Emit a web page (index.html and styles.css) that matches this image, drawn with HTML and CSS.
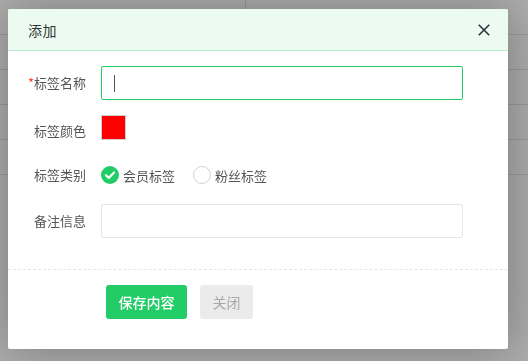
FILE: index.html
```html
<!DOCTYPE html>
<html lang="zh-CN">
<head>
<meta charset="utf-8">
<title>添加</title>
<link rel="stylesheet" href="styles.css">
</head>
<body>
<div class="page">
  <div class="trow"><div class="tcell first"></div><div class="tcell"></div></div>
  <div class="trow"></div>
  <div class="trow"></div>
  <div class="trow"></div>
  <div class="trow"></div>
</div>
<div class="shade"></div>
<div class="dialog">
  <div class="dialog-head">
    <span class="dialog-title">添加</span>
    <svg class="close-icon" width="12" height="12" viewBox="0 0 12 12"><path d="M0.8 0.8 L11.2 11.2 M11.2 0.8 L0.8 11.2" stroke="#2b323c" stroke-width="1.6" fill="none"/></svg>
  </div>
  <div class="dialog-body">
    <div class="form-row">
      <label class="form-label"><span class="req">*</span>标签名称</label>
      <div class="input focus"><span class="caret"></span></div>
    </div>
    <div class="form-row row-color">
      <label class="form-label">标签颜色</label>
      <div class="swatch"></div>
    </div>
    <div class="form-row">
      <label class="form-label">标签类别</label>
      <div class="radios">
        <span class="radio">
          <span class="dot checked"><svg width="18" height="18" viewBox="0 0 18 18"><path d="M5 9.2 L7.8 11.9 L13 6.6" stroke="#fff" stroke-width="2.2" fill="none" stroke-linecap="round" stroke-linejoin="round"/></svg></span>
          <span class="radio-text">会员标签</span>
        </span>
        <span class="radio">
          <span class="dot"></span>
          <span class="radio-text">粉丝标签</span>
        </span>
      </div>
    </div>
    <div class="form-row">
      <label class="form-label">备注信息</label>
      <div class="input"></div>
    </div>
  </div>
  <div class="dialog-foot">
    <button class="btn btn-primary">保存内容</button>
    <button class="btn btn-muted">关闭</button>
  </div>
</div>
</body>
</html>
```
FILE: styles.css
```css
html, body {
  margin: 0;
  padding: 0;
  width: 528px;
  height: 361px;
  overflow: hidden;
  background: #fff;
  font-family: "Noto Sans CJK SC", "Noto Sans", sans-serif;
}
.page {
  display: flex;
  flex-direction: column;
}
.trow {
  height: 34px;
  border-bottom: 1px solid #e2e2e2;
  display: flex;
}
.tcell.first {
  width: 245px;
  border-right: 1px solid #e2e2e2;
}
.shade {
  position: fixed;
  inset: 0;
  background: rgba(0, 0, 0, 0.32);
}
.dialog {
  position: absolute;
  left: 8px;
  top: 9px;
  width: 500px;
  height: 340px;
  background: #fff;
  border-radius: 2px;
  box-shadow: 1px 1px 50px rgba(0, 0, 0, 0.3);
  display: flex;
  flex-direction: column;
  overflow: hidden;
}
.dialog-head {
  height: 41px;
  border-bottom: 1px solid #b8eccb;
  background: #ebfbf1;
  display: flex;
  align-items: center;
  justify-content: space-between;
  padding: 0 18px 0 20px;
}
.dialog-title {
  font-size: 14px;
  color: #333;
  letter-spacing: 0.5px;
}
.close-icon {
  display: block;
  margin-top: 1px;
}
.dialog-body {
  padding-top: 15px;
  display: flex;
  flex-direction: column;
  gap: 12px;
}
.form-row {
  display: flex;
  align-items: center;
  height: 34px;
}
.form-label {
  width: 78px;
  margin-right: 15px;
  text-align: right;
  font-size: 13px;
  color: #555;
  line-height: 34px;
}
.row-color {
  align-items: flex-start;
}
.row-color .form-label {
  line-height: 38px;
}
.req {
  color: #ff3b30;
}
.input {
  box-sizing: border-box;
  width: 362px;
  height: 34px;
  border: 1px solid #e6e6e6;
  border-radius: 2px;
  display: flex;
  align-items: center;
  padding-left: 12px;
}
.input.focus {
  border-color: #22cc66;
}
.caret {
  display: block;
  width: 1px;
  height: 17px;
  background: #555;
}
.swatch {
  box-sizing: border-box;
  width: 25px;
  height: 25px;
  margin-top: 3px;
  border: 1px solid #cfcfcf;
  background: #ff0000;
}
.radios {
  display: flex;
  align-items: center;
  gap: 18px;
}
.radio {
  display: flex;
  align-items: center;
  gap: 4px;
}
.dot {
  box-sizing: border-box;
  width: 18px;
  height: 18px;
  border-radius: 50%;
  border: 1px solid #d2d2d2;
  background: #fff;
  display: flex;
}
.dot.checked {
  border: none;
  background: #22cc66;
}
.radio-text {
  font-size: 13px;
  color: #555;
}
.dialog-foot {
  margin-top: 31px;
  border-top: 1px dashed #e6e6e6;
  padding: 15px 0 0 98px;
  display: flex;
  gap: 13px;
}
.btn {
  height: 34px;
  border: none;
  border-radius: 3px;
  font-family: "Noto Sans CJK SC", "Noto Sans", sans-serif;
  font-size: 14px;
  padding: 0 12.5px;
  cursor: pointer;
}
.btn-primary {
  background: #22cc66;
  color: #fff;
  font-weight: 500;
}
.btn-muted {
  background: #ebebeb;
  color: #a8a8a8;
}
```
